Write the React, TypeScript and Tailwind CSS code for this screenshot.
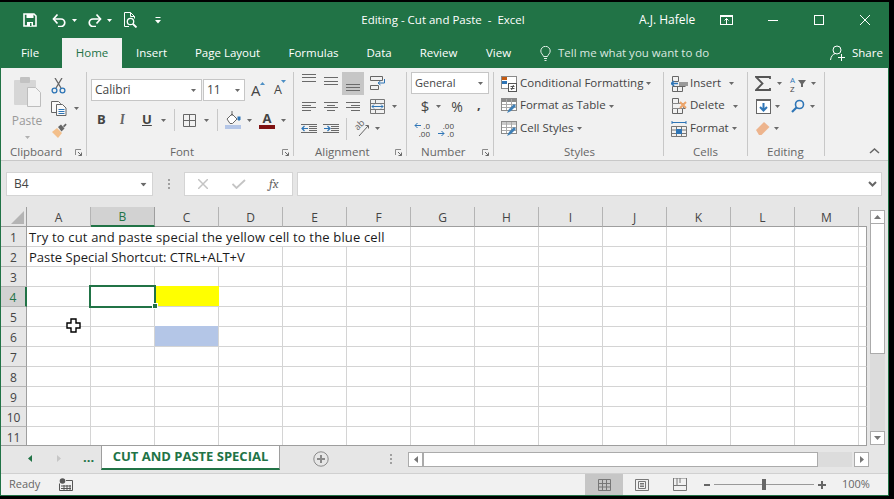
import React from "react";

const Caret = ({ c = "#6a6a6a", cls = "" }: { c?: string; cls?: string }) => (
  <svg width="5" height="3" viewBox="0 0 5 3" className={"shrink-0 " + cls}><path d="M0 0h5L2.5 3z" fill={c} /></svg>
);

const I = ({ w, h, cls = "", children }: { w: number; h: number; cls?: string; children: React.ReactNode }) => (
  <svg width={w} height={h} viewBox={`0 0 ${w} ${h}`} fill="none" className={"shrink-0 " + cls}>{children}</svg>
);

const Lines = ({ ys, xs }: { ys: number[]; xs: [number, number][] }) => (
  <>
    {ys.map((y, i) => (
      <rect key={i} x={xs[i][0]} y={y} width={xs[i][1] - xs[i][0]} height="1" fill="#6a6a6a" />
    ))}
  </>
);

const Launcher = () => (
  <I w={7} h={7}>
    <path d="M0.5 6V0.5H6" stroke="#8a8a8a" />
    <path d="M3 3l3.5 3.5M6.5 3.5v3h-3" stroke="#6a6a6a" />
  </I>
);

const Group = ({ w, label, labelCls = "", launcher, children }: { w: number; label: string; labelCls?: string; launcher?: boolean; children: React.ReactNode }) => (
  <div style={{ width: w }} className="flex h-[84px] shrink-0 flex-col border-r border-[#c8c8c8]">
    <div className="h-[72px] shrink-0">{children}</div>
    <div className="flex h-[12px] items-center pt-[3px] text-[11.5px] text-[#666]">
      <span className={"whitespace-nowrap " + labelCls}>{label}</span>
      {launcher && <span className="ml-auto mr-[4px] mt-[2px] flex"><Launcher /></span>}
    </div>
  </div>
);

const Row = ({ h, cls = "", children }: { h: number; cls?: string; children: React.ReactNode }) => (
  <div style={{ height: h }} className={"flex items-center " + cls}>{children}</div>
);

const StyleIcon = ({ kind }: { kind: number }) => (
  <I w={16} h={16}>
    <rect x="0.5" y="0.5" width="15" height="12" fill="#fff" stroke="#8a8a8a" />
    {kind === 0 ? (
      <>
        <rect x="1" y="1" width="5" height="3" fill="#c55a11" />
        <rect x="1" y="5" width="5" height="3" fill="#2e75b6" />
        <rect x="7.5" y="7.5" width="8" height="8" fill="#fff" stroke="#555" />
        <path d="M9.5 10.5h4M9.5 12.5h4M12.5 9l-2 5" stroke="#555" />
      </>
    ) : (
      <>
        <rect x="1" y="1" width="14" height="3" fill={kind === 1 ? "#8a8a8a" : "#c9c9c9"} />
        <path d="M5.5 1v11M10.5 1v11M1 6.5h14M1 9.5h14" stroke="#a9a9a9" />
        <path d="M6 15l2-4 5-5 2 2-5 5z" fill="#3f7fb5" />
      </>
    )}
  </I>
);

const StyleRow = ({ h, kind, text }: { h: number; kind: number; text: string }) => (
  <Row h={h} cls="pl-[7px]">
    <StyleIcon kind={kind} />
    <span className="ml-[3px] whitespace-nowrap pb-[2px]">{text}</span>
    <Caret cls="ml-[3px]" />
  </Row>
);

const CellIcon = ({ kind }: { kind: number }) => (
  <I w={17} h={16}>
    {kind < 2 ? (
      <>
        <path d="M1.5 0.5h6v5h-6zM1.5 10.5h13v0M1.5 10.5v5h10v-5M6.5 10.5v5" stroke="#666" />
        {kind === 0 ? (
          <>
            <rect x="8" y="6" width="9" height="4" fill="#9a9a9a" />
            <path d="M0 7.5h7M3 5L0.5 7.5 3 10" stroke="#2e75b6" strokeWidth="1.6" />
          </>
        ) : (
          <>
            <path d="M1.5 5.5h11v5h-11z" stroke="#888" />
            <path d="M9 4l6 6M15 4l-6 6" stroke="#eda56a" strokeWidth="2" />
          </>
        )}
      </>
    ) : (
      <>
        <path d="M1 1.5h14M1 0v3M15 0v3" stroke="#2e75b6" />
        <path d="M0.5 5.5h15v10h-15zM5.5 5v11M10.5 5v11M1 9h14M1 12.5h14" stroke="#777" />
        <rect x="5" y="8" width="6" height="5" fill="#2e75b6" />
      </>
    )}
  </I>
);

const CellRow = ({ h, kind, text, w }: { h: number; kind: number; text: string; w: number }) => (
  <Row h={h} cls="pl-[7px]">
    <CellIcon kind={kind} />
    <span style={{ width: w }} className="ml-[2px] whitespace-nowrap pb-[2px]">{text}</span>
    <Caret />
  </Row>
);

const cols = ["A", "B", "C", "D", "E", "F", "G", "H", "I", "J", "K", "L", "M", ""];

const covers: Record<number, number> = { 0: 5, 1: 3 };

const Sheet = () => (
  <div className="relative grid h-[239px] w-[866px] shrink-0 grid-cols-[26px_repeat(13,64px)_8px] grid-rows-[20px_repeat(11,20px)] overflow-hidden border-b border-[#9e9e9e] bg-white font-['Open_Sans',sans-serif]">
    <div className="flex items-end justify-end border-r border-b border-[#9e9e9e] bg-[#e6e6e6] p-[2px]">
      <svg width="13" height="13" viewBox="0 0 13 13"><path d="M13 0v13H0z" fill="#b4b4b4" /></svg>
    </div>
    {cols.map((c, i) =>
      i === 13 ? (
        <div key={i} className="border-b border-[#9e9e9e] bg-[#e6e6e6]" />
      ) : (
        <div key={i} className={c === "B" ? "flex items-center justify-center border-r border-b-2 border-[#9e9e9e] border-b-[#217346] bg-[#d2d2d2] pt-[2px] text-[12px] text-[#217346]" : "flex items-center justify-center border-r border-b border-[#b4b4b4] border-b-[#9e9e9e] bg-[#e6e6e6] pt-[2px] text-[12px] text-[#444]"}>{c}</div>
      )
    )}
    {Array.from({ length: 11 }, (_, r) => (
      <React.Fragment key={r}>
        <div className={r === 3 ? "flex items-center justify-center border-r-2 border-b border-[#217346] border-b-[#b4b4b4] bg-[#d2d2d2] pt-[2px] text-[12px] text-[#217346]" : "flex items-center justify-center border-r border-b border-[#9e9e9e] border-b-[#b4b4b4] bg-[#e6e6e6] pt-[2px] text-[12px] text-[#444]"}>{r + 1}</div>
        {cols.map((_c, i) => {
          const yellow = r === 3 && i === 2;
          const blue = r === 5 && i === 2;
          const covered = covers[r] !== undefined && i < covers[r];
          const last = i === 13;
          return (
            <div key={i} className={yellow ? "-mt-px h-[21px] border-b border-[#d4d4d4] bg-[#ffff00]" : blue ? "-mt-px h-[21px] border-r border-b border-[#d4d4d4] bg-[#b4c6e7]" : last ? "border-r border-b border-[#9e9e9e] border-b-[#d4d4d4]" : covered ? "border-b border-[#d4d4d4]" : "border-r border-b border-[#d4d4d4]"}>
              {r === 0 && i === 0 && <span className="block w-0 overflow-visible whitespace-nowrap pl-[2px] text-[13px] leading-[21px] tracking-[0.16px] text-[#1a1a1a]">Try to cut and paste special the yellow cell to the blue cell</span>}
              {r === 1 && i === 0 && <span className="block w-0 overflow-visible whitespace-nowrap pl-[2px] text-[13px] leading-[21px] text-[#1a1a1a]">Paste Special Shortcut: CTRL+ALT+V</span>}
            </div>
          );
        })}
      </React.Fragment>
    ))}
    <div className="absolute left-[88px] top-[78px] h-[23px] w-[67px] border-2 border-[#217346]" />
    <div className="absolute left-[151px] top-[96px] h-[6px] w-[6px] border border-white bg-[#217346]" />
    <svg className="absolute left-[65px] top-[111px]" width="15" height="15" viewBox="0 0 15 15"><path d="M5 1h5v4h4v5h-4v4H5v-4H1V5h4z" fill="#fff" stroke="#000" strokeWidth="1.4" /></svg>
  </div>
);

export default function App() {
  return (
    <div className="h-[499px] w-[894px] overflow-hidden bg-black pt-[2px] font-['Open_Sans',sans-serif]">
      <div className="flex h-[494px] w-[889px] flex-col border-x border-b border-[#217346] bg-[#e6e6e6]">
        {/* title bar */}
        <div className="flex h-[36px] shrink-0 items-center bg-[#217346] text-[12px] text-white">
          <I w={14} h={14} cls="ml-[22px]">
            <path d="M1 1h10l2 2v10H1z" stroke="#fff" strokeWidth="1.6" />
            <rect x="3.5" y="1" width="7" height="4" fill="#fff" />
            <rect x="4" y="9" width="6" height="4" fill="#fff" />
            <rect x="7" y="10" width="1.5" height="3" fill="#217346" />
          </I>
          <I w={14} h={14} cls="ml-[15px]">
            <path d="M2 6h7a3.7 3.7 0 010 7.5H6" stroke="#fff" strokeWidth="1.7" />
            <path d="M5.5 1.5L1.5 6l4 4.5" stroke="#fff" strokeWidth="1.7" />
          </I>
          <Caret c="#fff" cls="ml-[6px]" />
          <I w={15} h={14} cls="ml-[10px]">
            <path d="M13 6H6a3.7 3.7 0 000 7.5h3" stroke="#fff" strokeWidth="1.7" />
            <path d="M9.5 1.5l4 4.5-4 4.5" stroke="#fff" strokeWidth="1.7" />
          </I>
          <Caret c="#fff" cls="ml-[5px]" />
          <I w={15} h={16} cls="ml-[11px]">
            <path d="M6 14.5H1.5v-14h6l4 4v2" stroke="#fff" />
            <path d="M7.5 0.5v4h4" stroke="#fff" />
            <circle cx="7.5" cy="9.5" r="3.2" stroke="#fff" strokeWidth="1.3" />
            <path d="M10 12l3.5 3.5" stroke="#fff" strokeWidth="1.8" />
          </I>
          <I w={6} h={7} cls="ml-[17px]">
            <rect x="0.5" width="5" height="1" fill="#fff" />
            <path d="M0 3h6L3 6.5z" fill="#fff" />
          </I>
          <span className="ml-[200px] w-[164px] whitespace-pre text-center text-[11.5px]">Editing - Cut and Paste  -  Excel</span>
          <span className="ml-[114px] w-[55px] whitespace-nowrap text-center text-[12px]">A.J. Hafele</span>
          <I w={14} h={11} cls="ml-[26px]">
            <rect x="0.5" y="0.5" width="12" height="9" stroke="#fff" />
            <rect x="0" y="0" width="13" height="2" fill="#fff" />
            <path d="M6.5 9V3.5M4.5 5.5l2-2 2 2" stroke="#fff" />
          </I>
          <span className="ml-[34px] h-px w-[10px] bg-white" />
          <span className="ml-[36px] h-[10px] w-[10px] border border-white" />
          <I w={10} h={10} cls="ml-[36px]"><path d="M0 0l10 10M10 0L0 10" stroke="#fff" /></I>
        </div>
        {/* tabs */}
        <div className="flex h-[30px] shrink-0 items-center bg-[#217346] text-[11.5px] text-white">
          <span className="ml-[20px] flex w-[18px] justify-center">File</span>
          <span className="ml-[23px] flex h-full w-[60px] items-center justify-center bg-[#f1f1f1] text-[#217346]">Home</span>
          <span className="ml-[15px] flex w-[29px] justify-center">Insert</span>
          <span className="ml-[29px] flex w-[65px] justify-center whitespace-nowrap">Page Layout</span>
          <span className="ml-[29px] flex w-[49px] justify-center">Formulas</span>
          <span className="ml-[29px] flex w-[24px] justify-center">Data</span>
          <span className="ml-[29px] flex w-[37px] justify-center">Review</span>
          <span className="ml-[29px] flex w-[25px] justify-center">View</span>
          <I w={11} h={15} cls="ml-[29px]">
            <path d="M3.5 10.5C3 8.5.8 7.5.8 5a4.7 4.7 0 019.4 0c0 2.500-2.200 3.500-2.700 5.500z" stroke="#e3efe8" />
            <path d="M4 12.500h3M4.500 14.500h2" stroke="#e3efe8" />
          </I>
          <span className="ml-[7px] w-[150px] whitespace-nowrap text-[#dbe8e0]">Tell me what you want to do</span>
          <I w={16} h={16} cls="ml-[122px]">
            <circle cx="7" cy="5" r="4" stroke="#fff" />
            <path d="M0.500 15c.5-4 2.500-6 5-6.500M8 9.500" stroke="#fff" />
            <path d="M8 12.500h7M11.500 9v7" stroke="#fff" />
          </I>
          <span className="ml-[6px] w-[29px] whitespace-nowrap">Share</span>
        </div>
        {/* ribbon */}
        <div className="flex h-[93px] shrink-0 border-b border-[#c8c8c8] bg-[#f1f1f1] pt-[4px] text-[11.5px] text-[#444]">
          <Group w={86} label="Clipboard" labelCls="ml-[9px]" launcher>
            <div className="flex">
              <div className="ml-[11px] flex w-[30px] flex-col items-center pt-[4px]">
                <I w={29} h={31}>
                  <rect x="1" y="4" width="22" height="25" rx="1" fill="#d6d6d6" />
                  <rect x="7" y="1" width="10" height="6" rx="1" fill="#c2c2c2" />
                  <path d="M14.500 11.500h8l5 5v14h-13z" fill="#f4f4f4" stroke="#bdbdbd" />
                </I>
                <span className="mt-[5px] text-[12px] text-[#9a9a9a]">Paste</span>
                <Caret c="#b0b0b0" cls="mt-[6px]" />
              </div>
              <div className="ml-[9px] flex flex-col">
                <Row h={24} cls="pt-[4px]">
                  <I w={15} h={16}>
                    <path d="M4 0l6 10M11 0L5 10" stroke="#666" strokeWidth="1.300" />
                    <circle cx="3.500" cy="12.500" r="2.400" stroke="#2e75b6" strokeWidth="1.300" />
                    <circle cx="11.500" cy="12.500" r="2.400" stroke="#2e75b6" strokeWidth="1.300" />
                  </I>
                </Row>
                <Row h={23} cls="pt-[2px]">
                  <I w={16} h={15}>
                    <path d="M0.500 0.500h7l2 2v9h-9z" fill="#fafafa" stroke="#666" />
                    <path d="M5.500 3.500h6l3.500 3.500v7.500h-9.500z" fill="#fafafa" stroke="#666" />
                    <path d="M7.500 8.500h6M7.500 10.500h6M7.500 12.500h6" stroke="#2e75b6" />
                  </I>
                  <Caret cls="ml-[7px]" />
                </Row>
                <Row h={23}>
                  <I w={16} h={15}>
                    <path d="M1 9l5-4 5 5-4 5z" fill="#f3bf8b" />
                    <path d="M7 4l3-2.500 3.500 4-3 3z" fill="#666" />
                    <path d="M12 3l2.500-2.500 1.200 1.200L13 4.500z" fill="#666" />
                  </I>
                </Row>
              </div>
            </div>
          </Group>
          <Group w={207} label="Font" labelCls="ml-[83px]" launcher>
            <div className="pl-[4px] pt-[7px] text-[12px]">
              <div className="flex h-[22px] items-center">
                <div className="flex h-[22px] w-[111px] items-center border border-[#c6c6c6] bg-white pl-[3px] pr-[5px]">
                  <span>Calibri</span><Caret cls="ml-auto" />
                </div>
                <div className="ml-px flex h-[22px] w-[42px] items-center border border-[#c6c6c6] bg-white pl-[3px] pr-[4px]">
                  <span>11</span><Caret cls="ml-auto" />
                </div>
                <span className="relative ml-[6px] flex w-[14px] text-[15px] leading-none">A<svg className="absolute -top-[1px] left-[9px]" width="5" height="3" viewBox="0 0 5 3"><path d="M0 3h5L2.500 0z" fill="#4d8fc4" /></svg></span>
                <span className="relative ml-[9px] flex w-[13px] pt-[1px] text-[12.500px] leading-none">A<svg className="absolute -top-[3px] left-[7px]" width="5" height="3" viewBox="0 0 5 3"><path d="M0 0h5L2.500 3z" fill="#4d8fc4" /></svg></span>
              </div>
              <div className="mt-[8px] flex h-[22px] items-center text-[13px]">
                <span className="ml-[6px] w-[9px] font-bold">B</span>
                <span className="ml-[14px] w-[8px] font-serif font-bold italic text-[#666]">I</span>
                <span className="ml-[14px] w-[9px] font-bold underline">U</span>
                <Caret cls="ml-[10px]" />
                <span className="ml-[8px] h-[22px] w-px bg-[#c8c8c8]" />
                <I w={13} h={13} cls="ml-[8px]"><path d="M0.500 0.500h12v12H0.500zM6.500 0v13M0 6.500h13" stroke="#666" /></I>
                <Caret cls="ml-[8px]" />
                <span className="ml-[8px] h-[22px] w-px bg-[#c8c8c8]" />
                <I w={16} h={20} cls="ml-[7px]">
                  <path d="M2 9l5-5 5 5-4.500 4.500H5z" fill="#fff" stroke="#666" />
                  <path d="M7 1v5" stroke="#666" />
                  <path d="M12.500 6.500h3v3l-1.500 1.500-1.500-1.500z" fill="#2e75b6" />
                  <rect y="15" width="16" height="4" fill="#b4c6e7" />
                </I>
                <Caret cls="ml-[6px]" />
                <span className="ml-[7px] flex w-[16px] flex-col items-center text-[13px] font-bold leading-[13px]">A<span className="h-[4px] w-[16px] bg-[#7f1212]" /></span>
                <Caret cls="ml-[6px]" />
              </div>
            </div>
          </Group>
          <Group w={113} label="Alignment" labelCls="ml-[21px]" launcher>
            <Row h={23}>
              <I w={14} h={23} cls="ml-[8px]"><Lines ys={[2, 5, 9]} xs={[[0, 14], [0, 14], [0, 14]]} /></I>
              <I w={14} h={23} cls="ml-[8px]"><Lines ys={[5, 9, 12]} xs={[[0, 14], [0, 14], [0, 14]]} /></I>
              <span className="-mt-px ml-[4px] flex h-[23px] w-[22px] items-center justify-center bg-[#c6c6c6]">
                <I w={14} h={23}><Lines ys={[12, 15, 18]} xs={[[0, 14], [0, 14], [0, 14]]} /></I>
              </span>
              <I w={16} h={15} cls="ml-[6px]">
                <path d="M0.500 0.500h12v4h-12zM0.500 9.500h8v4h-8z" stroke="#666" />
                <path d="M14.500 3v4h-6M10.500 5l-2.500 2 2.500 2" stroke="#2e75b6" />
              </I>
            </Row>
            <Row h={22}>
              <I w={14} h={9} cls="ml-[8px]"><Lines ys={[0, 3, 5, 8]} xs={[[0, 14], [0, 9], [0, 14], [0, 9]]} /></I>
              <I w={14} h={9} cls="ml-[8px]"><Lines ys={[0, 3, 5, 8]} xs={[[0, 14], [3, 11], [0, 14], [3, 11]]} /></I>
              <I w={14} h={9} cls="ml-[8px]"><Lines ys={[0, 3, 5, 8]} xs={[[0, 14], [5, 14], [0, 14], [5, 14]]} /></I>
              <I w={15} h={15} cls="ml-[10px]">
                <path d="M0.500 0.500h14v14H0.500zM0 4.500h15M0 10.500h15M5.500 0v4M5.500 11v4" stroke="#777" />
                <path d="M2 7.500h11M4 5.500l-2 2 2 2M11 5.500l2 2-2 2" stroke="#2e75b6" />
              </I>
              <Caret cls="ml-[7px]" />
            </Row>
            <Row h={23}>
              <I w={16} h={11} cls="ml-[7px]">
                <Lines ys={[1, 3, 5, 7, 9]} xs={[[0, 16], [8, 16], [8, 16], [8, 16], [0, 16]]} />
                <path d="M7 5.500H1M3.500 3L1 5.500 3.500 8" stroke="#2e75b6" strokeWidth="1.200" />
              </I>
              <I w={16} h={11} cls="ml-[6px]">
                <Lines ys={[1, 3, 5, 7, 9]} xs={[[0, 16], [8, 16], [8, 16], [8, 16], [0, 16]]} />
                <path d="M1 5.500h6M4.500 3L7 5.500 4.500 8" stroke="#2e75b6" strokeWidth="1.200" />
              </I>
              <span className="ml-[7px] h-[22px] w-px bg-[#c8c8c8]" />
              <span className="relative ml-[6px] flex h-[16px] w-[18px] shrink-0">
                <span className="absolute left-[1px] top-[-3px] -rotate-45 text-[9px] leading-[14px] text-[#666]">ab</span>
                <I w={18} h={16}><path d="M6 15L15 5M12.500 4.500h3v3" stroke="#666" /></I>
              </span>
              <Caret cls="ml-[4px]" />
            </Row>
          </Group>
          <Group w={87} label="Number" labelCls="ml-[14px]" launcher>
            <div className="pl-[4px]">
              <div className="flex h-[22px] w-[78px] items-center border border-[#c6c6c6] bg-white pl-[3px] pr-[5px]">
                <span className="text-[11px]">General</span><Caret cls="ml-auto" />
              </div>
              <Row h={23} cls="mt-px">
                <span className="ml-[8px] w-[12px] text-center text-[15px]">$</span>
                <Caret cls="ml-[5px]" />
                <span className="ml-[9px] w-[14px] text-center text-[14px]">%</span>
                <span className="ml-[13px] pb-[4px] text-[13px] font-bold">,</span>
              </Row>
              <Row h={23}>
                <div className="ml-[3px] flex w-[16px] flex-col">
                  <div className="flex h-[8px] items-center justify-between">
                    <I w={7} h={7}><path d="M7 3.500H1M3.500 1L1 3.500 3.500 6" stroke="#2e75b6" /></I>
                    <span className="text-[8px] leading-[8px]">.0</span>
                  </div>
                  <span className="h-[8px] text-right text-[8px] leading-[8px]">.00</span>
                </div>
                <div className="ml-[8px] flex w-[16px] flex-col">
                  <span className="h-[8px] text-right text-[8px] leading-[8px]">.00</span>
                  <div className="flex h-[8px] items-center justify-between">
                    <I w={7} h={7}><path d="M0 3.500h6M3.500 1L6 3.500 3.500 6" stroke="#2e75b6" /></I>
                    <span className="text-[8px] leading-[8px]">.0</span>
                  </div>
                </div>
              </Row>
            </div>
          </Group>
          <Group w={170} label="Styles" labelCls="ml-[70px]">
            <StyleRow h={23} kind={0} text="Conditional Formatting" />
            <StyleRow h={22} kind={1} text="Format as Table" />
            <StyleRow h={23} kind={2} text="Cell Styles" />
          </Group>
          <Group w={84} label="Cells" labelCls="ml-[29px]">
            <CellRow h={23} kind={0} text="Insert" w={39} />
            <CellRow h={22} kind={1} text="Delete" w={43} />
            <CellRow h={23} kind={2} text="Format" w={42} />
          </Group>
          <Group w={77} label="Editing" labelCls="ml-[19px]">
            <Row h={23}>
              <I w={16} h={15} cls="ml-[7px]"><path d="M15 3V1H1l6.500 6.500L1 14h14v-2" stroke="#555" strokeWidth="1.800" /></I>
              <Caret cls="ml-[6px]" />
              <span className="ml-[8px] flex w-[7px] flex-col text-[8px] leading-[9px]"><span className="text-[#2e75b6]">A</span><span>Z</span></span>
              <I w={8} h={7} cls="ml-[1px]"><path d="M0 0h8L5 4v3H3V4z" fill="#666" /></I>
              <Caret cls="ml-[5px]" />
            </Row>
            <Row h={22}>
              <I w={15} h={15} cls="ml-[8px]">
                <rect x="0.500" y="0.500" width="14" height="14" fill="#fff" stroke="#666" />
                <rect x="0" y="0" width="15" height="2" fill="#666" />
                <path d="M7.500 4v7M4 8l3.500 3.500L11 8" stroke="#2e75b6" strokeWidth="2" />
              </I>
              <Caret cls="ml-[4px]" />
              <I w={14} h={14} cls="ml-[11px]">
                <circle cx="8.500" cy="5.500" r="4" stroke="#2e75b6" strokeWidth="1.600" />
                <path d="M5.500 8.500L1 13" stroke="#2e75b6" strokeWidth="2.200" />
              </I>
              <Caret cls="ml-[5px]" />
            </Row>
            <Row h={23}>
              <I w={14} h={13} cls="ml-[8px]">
                <path d="M0 8l8-8 5.500 5-8 8H3z" fill="#edb48d" />
              </I>
              <Caret cls="ml-[4px]" />
            </Row>
          </Group>
          <div className="flex flex-1 items-end justify-end pb-[6px] pr-[8px]">
            <I w={11} h={6}><path d="M1 5l4.500-4L10 5" stroke="#666" strokeWidth="1.500" /></I>
          </div>
        </div>
        {/* formula bar */}
        <div className="flex h-[46px] shrink-0 items-start bg-[#e6e6e6] pl-[5px] pt-[11px] text-[12px] text-[#444]">
          <div className="flex h-[24px] w-[147px] items-center border border-[#d4d4d4] bg-white pl-[7px] pr-[6px]">
            <span>B4</span><Caret cls="ml-auto scale-125" />
          </div>
          <I w={3} h={11} cls="ml-[15px] mt-[7px]"><path d="M0 0h2v2H0zM0 4h2v2H0zM0 8h2v2H0z" fill="#a0a0a0" /></I>
          <div className="ml-[13px] flex h-[24px] w-[109px] items-center border border-[#d4d4d4] bg-white">
            <I w={10} h={10} cls="ml-[13px]"><path d="M0 0l10 10M10 0L0 10" stroke="#c4c4c4" strokeWidth="1.500" /></I>
            <I w={14} h={10} cls="ml-[24px]"><path d="M0.500 5l4 4L13 1" stroke="#c4c4c4" strokeWidth="1.800" /></I>
            <span className="ml-[23px] font-serif text-[13px] italic text-[#666]">fx</span>
          </div>
          <div className="ml-[4px] flex h-[24px] w-[585px] items-center justify-end border border-[#d4d4d4] bg-white pr-[4px]">
            <I w={9} h={6}><path d="M1 1l3.500 3.500L8 1" stroke="#666" strokeWidth="2" /></I>
          </div>
        </div>
        {/* sheet + scrollbar */}
        <div className="flex h-[239px] shrink-0">
          <Sheet />
          <div className="ml-[3px] mt-[3px] flex h-[235px] w-[15px] flex-col bg-[#dcdcdc]">
            <div className="flex h-[14px] shrink-0 items-center justify-center border border-[#ababab] bg-white"><I w={7} h={4}><path d="M0 4h7L3.500 0z" fill="#777" /></I></div>
            <div className="h-[130px] shrink-0 border border-t-0 border-[#ababab] bg-white" />
            <div className="flex-1" />
            <div className="flex h-[14px] shrink-0 items-center justify-center border border-[#ababab] bg-white"><I w={7} h={4}><path d="M0 0h7L3.500 4z" fill="#777" /></I></div>
          </div>
        </div>
        {/* sheet tabs */}
        <div className="flex h-[27px] shrink-0 text-[#444]">
          <div className="flex h-[24px] w-[100px] shrink-0 items-center">
            <I w={4} h={7} cls="ml-[27px]"><path d="M4 0v7L0 3.500z" fill="#217346" /></I>
            <I w={4} h={7} cls="ml-[25px]"><path d="M0 0v7l4-3.500z" fill="#c6c6c6" /></I>
            <span className="ml-[22px] pb-[2px] text-[13px] font-bold leading-none text-[#217346]">...</span>
          </div>
          <div className="flex h-[24px] w-[179px] shrink-0 items-center justify-center border-x border-b-2 border-[#9e9e9e] border-b-[#217346] bg-white text-[13px] font-bold whitespace-nowrap text-[#217346]">CUT AND PASTE SPECIAL</div>
          <div className="flex h-[24px] items-center">
            <I w={16} h={16} cls="ml-[33px] mt-[2px]">
              <circle cx="8" cy="8" r="7.200" stroke="#8a8a8a" />
              <path d="M4 8h8M8 4v8" stroke="#8a8a8a" strokeWidth="2" />
            </I>
            <I w={2} h={10} cls="ml-[61px] mt-[2px]"><path d="M0 0h2v2H0zM0 4h2v2H0zM0 8h2v2H0z" fill="#a0a0a0" /></I>
            <div className="ml-[16px] mt-[3px] flex h-[15px] w-[15px] items-center justify-center border border-[#ababab] bg-white"><I w={4} h={7}><path d="M4 0v7L0 3.500z" fill="#777" /></I></div>
            <div className="mt-[3px] flex h-[15px] w-[429px] bg-[#dcdcdc]">
              <div className="h-full w-[395px] border border-[#ababab] bg-white" />
            </div>
            <div className="ml-[2px] mt-[3px] flex h-[15px] w-[15px] items-center justify-center border border-[#ababab] bg-white"><I w={4} h={7}><path d="M0 0v7l4-3.500z" fill="#777" /></I></div>
          </div>
        </div>
        {/* status bar */}
        <div className="flex h-[22px] shrink-0 items-center border-t border-[#d0d0d0] bg-[#f1f1f1] text-[11px] text-[#666]">
          <span className="ml-[8px] w-[31px]">Ready</span>
          <I w={14} h={13} cls="ml-[19px]">
            <circle cx="3.500" cy="3" r="2.800" fill="#555" />
            <path d="M0.500 5.500v7h13v-10H7M2 8h10M2 10.500h10M5 7v5M8 7v5M11 7v5" stroke="#555" />
          </I>
          <div className="ml-[512px] flex h-full w-[38px] items-center justify-center bg-[#c6c6c6]">
            <I w={13} h={12}><path d="M0.500 0.500h12v11h-12zM0 4.500h13M0 8h13M4.500 0v12M8.500 0v12" stroke="#777" /></I>
          </div>
          <I w={14} h={12} cls="ml-[12px]"><path d="M0.500 0.500h13v11h-13z" stroke="#777" /><path d="M3.500 2.500h7v7h-7zM5 4.500h4M5 6h4M5 7.500h4" stroke="#777" /></I>
          <I w={14} h={13} cls="ml-[24px]"><path d="M0.500 0h13v12.500H0.500zM7 0v5M0.500 7.500H13M4 0v7" stroke="#777" /></I>
          <span className="ml-[17px] h-[2px] w-[6px] bg-[#666]" />
          <div className="ml-[4px] flex h-[12px] w-[100px] items-center">
            <span className="h-px w-[48px] bg-[#999]" />
            <span className="h-[11px] w-[4px] bg-[#666]" />
            <span className="h-px w-[48px] bg-[#999]" />
          </div>
          <I w={8} h={8} cls="ml-[4px]"><path d="M0 4h8M4 0v8" stroke="#666" strokeWidth="2" /></I>
          <span className="ml-[16px] text-[#666]">100%</span>
        </div>
      </div>
    </div>
  );
}
